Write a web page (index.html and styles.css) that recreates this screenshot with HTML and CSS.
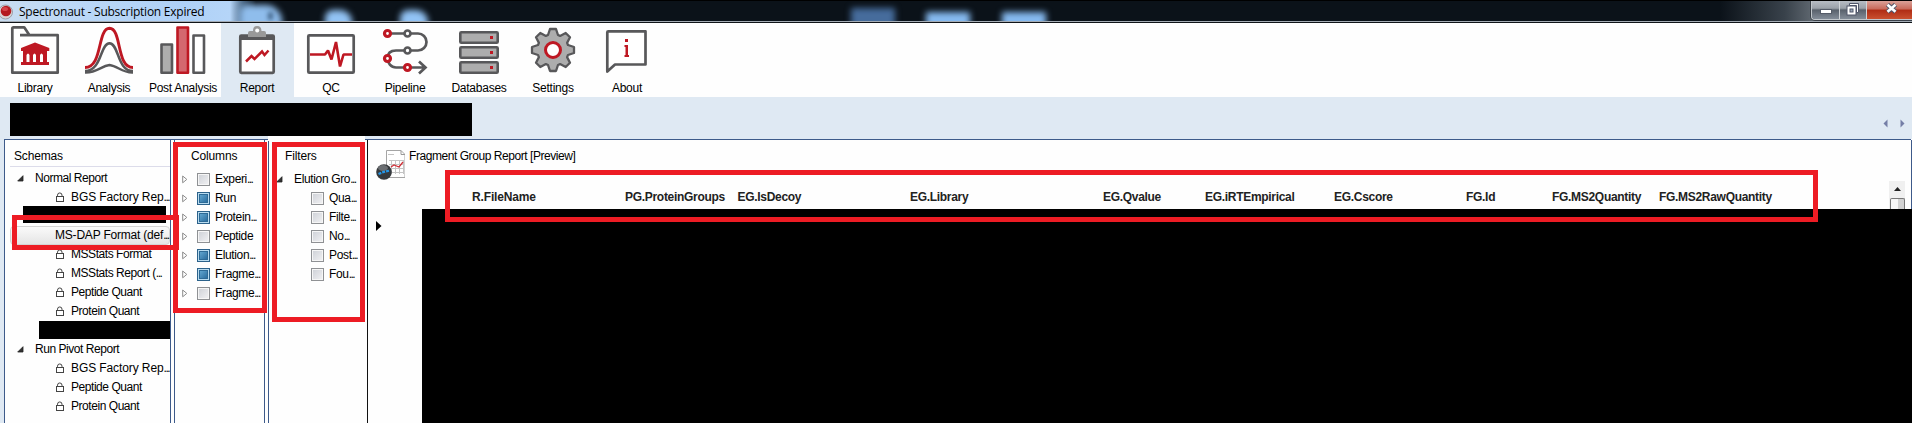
FILE: index.html
```html
<!DOCTYPE html>
<html lang="en">
<head>
<meta charset="utf-8">
<title>Spectronaut - Subscription Expired</title>
<link rel="stylesheet" href="styles.css">
</head>
<body>
<svg class="defs" width="0" height="0">
  <symbol id="lock" viewBox="0 0 10 11"><path d="M2.5 5V3.2A2.2 2.2 0 0 1 7 3.2V5" fill="none" stroke="#444"/><rect x="1.5" y="4.500" width="7" height="5" fill="#fff" stroke="#444"/></symbol>
  <symbol id="open" viewBox="0 0 7 7"><path d="M6 .7V6H.7Z" fill="#333" stroke="#222" stroke-width=".8"/></symbol>
  <symbol id="shut" viewBox="0 0 6 9"><path d="M.7 1V7.8L4.8 4.4Z" fill="#fff" stroke="#8c8c8c"/></symbol>
</svg>
<div class="window">
  <header class="titlebar">
    <svg class="appicon" viewBox="0 0 14 20" width="14" height="20"><circle cx="5.500" cy="12" r="7" fill="#d8d4d6" stroke="#8d8f98" stroke-width=".8"/><circle cx="6" cy="11" r="5.3" fill="#b41a20"/><ellipse cx="5" cy="9" rx="3" ry="2" fill="#d5444a"/></svg>
    <span class="title">Spectronaut - Subscription Expired</span>
    <i class="glow g1"></i><i class="glow g2"></i><i class="glow g3"></i><i class="glow g4"></i><i class="glow g5"></i><i class="glow g6"></i><i class="glow g7"></i>
    <div class="winbtns">
      <span class="wb min"><svg width="12" height="5"><rect x=".5" y=".5" width="11" height="4" fill="#fff" stroke="#555b68"/></svg></span>
      <span class="wb max"><svg width="13" height="13"><path d="M3.500.5H12.500V9.500H10.500V2.500H3.500Z" fill="#fff" stroke="#50566a"/><rect x="1" y="3" width="9" height="9" fill="#fff" stroke="#50566a"/><rect x="4" y="6" width="3" height="3" fill="#9aa7b8" stroke="#50566a"/></svg></span>
      <span class="wb close"><svg width="13" height="11"><path d="M2.500 1.500 10.500 9M10.500 1.500 2.500 9" stroke="#50566a" stroke-width="4.500"/><path d="M2.500 1.800 10.500 8.800M10.500 1.800 2.500 8.800" stroke="#fff" stroke-width="2.600"/></svg></span>
    </div>
  </header>

  <nav class="toolbar">
    <div class="tool"><svg viewBox="-2 23 74 53"><path d="M20 35.200H57.700V72.700H12.300V28.500Q12.300 27.300 13.500 27.300H24.200L29 34.500" fill="none" stroke="#58585a" stroke-width="2.700" stroke-linejoin="round"/><path d="M35 42.500 49.300 48V51H47V62H49V65H21V62H23V51H21V48Z" fill="#be1823"/><path d="M26.500 62V55Q28 52 29.500 55V62ZM33 62V55Q34.500 52 36 55V62ZM40 62V55Q41.500 52 43 55V62Z" fill="#fff"/></svg><span>Library</span></div>
    <div class="tool"><svg viewBox="72 23 74 53" fill="none"><g stroke="#58585a" stroke-width="2.500"><path d="M85 72.500C97 73 101 66 109.500 65C118 66 122 73 133 72.500"/><path d="M85 71C102 71 100 43.500 109.500 43.300C119 43.500 117 71 133 71"/></g><path d="M85 67.500C103 67.500 97 28.500 109.500 28.300C122 28.500 116 67.500 133 67.500" stroke="#be1823" stroke-width="2.900"/></svg><span>Analysis</span></div>
    <div class="tool"><svg viewBox="146 23 74 53" stroke-width="2.600" stroke-linejoin="round"><rect x="161.500" y="44.500" width="10.500" height="28.200" fill="#adadad" stroke="#58585a"/><rect x="177.500" y="27.500" width="10.500" height="45.200" fill="#d4686f" stroke="#be1823"/><rect x="193.500" y="35.500" width="10.500" height="37.200" fill="#fff" stroke="#58585a"/></svg><span>Post Analysis</span></div>
    <div class="tool on"><svg viewBox="220 23 74 53"><rect x="240.300" y="35.500" width="33.400" height="37.300" rx="1" fill="#fff" stroke="#58585a" stroke-width="2.700"/><path d="M240 35H274V40H240Z" fill="#58585a"/><path d="M248 37V33Q248 31 250 31H253Q253 26 257.200 26T261.500 31H264Q266 31 266 33V37Z" fill="#999"/><circle cx="257.200" cy="30.500" r="2" fill="#fff"/><path d="M246 61.500 251.500 56 254.500 59 262 51.500 264.500 55 268.500 50.500" fill="none" stroke="#be1823" stroke-width="2.500"/></svg><span>Report</span></div>
    <div class="tool"><svg viewBox="294 23 74 53" fill="none"><rect x="308.300" y="35.300" width="45.400" height="37.400" rx="1" fill="#fff" stroke="#58585a" stroke-width="2.700"/><path d="M310 54.500H325L328 50.500 331.500 59.500 336 42 340 66.500 343.500 54.500H352" stroke="#be1823" stroke-width="2.600" stroke-linejoin="bevel"/></svg><span>QC</span></div>
    <div class="tool"><svg viewBox="368 23 74 53" fill="none" stroke-width="2.700"><path d="M388 33.500H418A8.500 8.500 0 0 1 418 50.500H396C390 50.500 387.500 54 387.500 58.500S391 67.500 396 67.500H425M419 61.500 425.500 67.500 419 73.500" stroke="#58585a"/><g fill="#fff"><circle cx="387.500" cy="33.500" r="3" stroke="#be1823" stroke-width="3.200"/><circle cx="407.500" cy="33.500" r="3" stroke="#58585a"/><circle cx="407.500" cy="50.500" r="3" stroke="#58585a"/><circle cx="387.500" cy="58.500" r="3" stroke="#be1823" stroke-width="3.200"/><circle cx="407.500" cy="67.500" r="3" stroke="#be1823" stroke-width="3.200"/></g></svg><span>Pipeline</span></div>
    <div class="tool"><svg viewBox="442 23 74 53"><g fill="#adadad" stroke="#58585a" stroke-width="2.600"><rect x="460.300" y="32.300" width="37.400" height="10.400" rx="1"/><rect x="460.300" y="47.300" width="37.400" height="10.400" rx="1"/><rect x="460.300" y="62.300" width="37.400" height="10.400" rx="1"/></g><path d="M490 36h3v3h-3zM490 51h3v3h-3zM490 66h3v3h-3z" fill="#be1823"/></svg><span>Databases</span></div>
    <div class="tool"><svg viewBox="516 23 74 53"><path transform="translate(553 50)" d="M-5-15-3-21H3L5-15 7.100-14.100 12.700-17 17-12.700 14.100-7.100 15-5 21-3V3L15 5 14.100 7.100 17 12.700 12.700 17 7.100 14.100 5 15 3 21H-3L-5 15-7.100 14.100-12.700 17-17 12.700-14.100 7.100-15 5-21 3V-3L-15-5-14.100-7.100-17-12.700-12.700-17-7.100-14.100Z" fill="#adadad" stroke="#58585a" stroke-width="2.300" stroke-linejoin="round"/><circle cx="553" cy="50" r="7.500" fill="#fff" stroke="#be1823" stroke-width="3"/></svg><span>Settings</span></div>
    <div class="tool"><svg viewBox="590 23 74 53"><path d="M608.300 31.300H645.500V64.500H615L607.300 71.500V32.300Q607.300 31.300 608.300 31.300Z" fill="#fff" stroke="#58585a" stroke-width="2.700" stroke-linejoin="round"/><path d="M625 39h3v3h-3zM624.500 45h3.500v10h1v2h-4.500v-2h1v-8h-1z" fill="#be1823"/></svg><span>About</span></div>
  </nav>

  <div class="tabstrip">
    <div class="redacted tabs"></div>
    <svg class="pager" width="22" height="9"><path d="M4.500.5V8.500L.5 4.500ZM17.500.5V8.500L21.500 4.500Z" fill="#747ea6"/></svg>
  </div>

  <main class="body">
    <section class="panel schemas">
      <h2>Schemas</h2>
      <ul>
        <li class="group"><svg><use href="#open"/></svg>Normal Report</li>
        <li><svg><use href="#lock"/></svg><span class="wide">BGS Factory Rep</span><span class="dots">...</span></li>
        <li class="redacted r1"></li>
        <li class="current">MS-DAP Format (def<span class="dots">...</span></li>
        <li><svg><use href="#lock"/></svg>MSStats Format</li>
        <li><svg><use href="#lock"/></svg>MSStats Report (<span class="dots">...</span></li>
        <li><svg><use href="#lock"/></svg>Peptide Quant</li>
        <li><svg><use href="#lock"/></svg>Protein Quant</li>
        <li class="redacted r2"></li>
        <li class="group"><svg><use href="#open"/></svg>Run Pivot Report</li>
        <li><svg><use href="#lock"/></svg><span class="wide">BGS Factory Rep</span><span class="dots">...</span></li>
        <li><svg><use href="#lock"/></svg>Peptide Quant</li>
        <li><svg><use href="#lock"/></svg>Protein Quant</li>
      </ul>
    </section>
    <section class="panel columns">
      <h2>Columns</h2>
      <ul>
        <li><svg><use href="#shut"/></svg><i class="box"></i>Experi<span class="dots">...</span></li>
        <li><svg><use href="#shut"/></svg><i class="box full"></i>Run</li>
        <li><svg><use href="#shut"/></svg><i class="box full"></i>Protein<span class="dots">...</span></li>
        <li><svg><use href="#shut"/></svg><i class="box"></i>Peptide</li>
        <li><svg><use href="#shut"/></svg><i class="box full"></i>Elution<span class="dots">...</span></li>
        <li><svg><use href="#shut"/></svg><i class="box full"></i>Fragme<span class="dots">...</span></li>
        <li><svg><use href="#shut"/></svg><i class="box"></i>Fragme<span class="dots">...</span></li>
      </ul>
    </section>
    <section class="panel filters">
      <h2>Filters</h2>
      <ul>
        <li class="group"><svg><use href="#open"/></svg>Elution Gro<span class="dots">...</span></li>
        <li><i class="box"></i>Qua<span class="dots">...</span></li>
        <li><i class="box"></i>Filte<span class="dots">...</span></li>
        <li><i class="box"></i>No<span class="dots">...</span></li>
        <li><i class="box"></i>Post<span class="dots">...</span></li>
        <li><i class="box"></i>Fou<span class="dots">...</span></li>
      </ul>
    </section>
    <section class="preview">
      <div class="caption">
        <svg width="30" height="31" viewBox="375 149 30 31"><path d="M386.500 150.500H401L405 154.500V177.500H386.500Z" fill="#fff" stroke="#a5a5a5"/><path d="M401 150.500V154.500H405" fill="none" stroke="#999"/><path d="M388 154.500H394M389 160.500H403.500M389 164.500H403.500M389 168.500H403.500M389 172.500H403.500M391.500 160V174M395.500 160V174M399.500 160V174M403.500 160V174" stroke="#c4c4c4"/><path d="M391 167 394 165 399 167 403 162" fill="none" stroke="#d03038" stroke-width="1.300"/><circle cx="384" cy="172" r="7.800" fill="#36393c"/><ellipse cx="383" cy="168" rx="5" ry="3" fill="#6b6e72"/><path d="M378.500 174 382 172.500 386 171.500 390 170.500" fill="none" stroke="#2597e8" stroke-width="2.300" stroke-dasharray="3 1"/></svg>
        <span>Fragment Group Report [Preview]</span>
      </div>
      <div class="gridhead">
        <b class="h1">R.FileName</b><b class="h2">PG.ProteinGroups</b><b class="h3">EG.IsDecoy</b><b class="h4">EG.Library</b><b class="h5">EG.Qvalue</b><b class="h6">EG.iRTEmpirical</b><b class="h7">EG.Cscore</b><b class="h8">FG.Id</b><b class="h9">FG.MS2Quantity</b><b class="h10">FG.MS2RawQuantity</b>
        <div class="scroll"><svg width="7" height="4"><path d="M0 4 3.500 0 7 4Z" fill="#222"/></svg><i></i></div>
      </div>
      <div class="gridbody">
        <div class="rowhead"><svg width="6" height="10"><path d="M0 0 5.500 5 0 10Z"/></svg></div>
        <div class="redacted data"></div>
      </div>
    </section>
    <div class="gap"></div>
  </main>

  <div class="mark m1"></div><div class="mark m2"></div><div class="mark m3"></div><div class="mark m4"></div>
</div>
</body>
</html>
```
FILE: styles.css
```css
* { box-sizing: border-box; }
body { margin: 0; background: #fff; font: 12px/19px "Liberation Sans", Arial, sans-serif; color: #000; }
ul, h2 { margin: 0; padding: 0; list-style: none; font-size: 12px; font-weight: normal; }
.defs { position: absolute; }
.window { position: relative; width: 1912px; height: 423px; overflow: hidden; display: flex; flex-direction: column; }
.redacted { background: #000; }

.titlebar { position: relative; flex: none; height: 23px; display: flex; overflow: hidden; border-top: 1px solid #000; border-bottom: 1px solid #101418;
  background: linear-gradient(90deg, #c9dcf0 0, #bcd8f6 70px, #afd1f7 180px, #b5d5f8 230px, #4b6885 243px, #0b1219 256px, #0b1219 1720px, #39424b 1785px, #777f87 1830px, #8b9299 1912px); }
.titlebar::after { content: ""; position: absolute; left: 0; right: 0; bottom: 0; height: 1px; background: #a4acb5; }
.appicon { flex: none; margin-top: -1px; }
.title { position: relative; z-index: 1; margin-left: 5px; font: 12px/22px "Open Sans", "Noto Sans", sans-serif; letter-spacing: -.25px; white-space: nowrap; }
.glow { position: absolute; filter: blur(3px); background: #92c3f5; }
.g1 { left: 240px; top: 4px; width: 42px; height: 24px; border-radius: 8px 16px 0 0; background: #8fbdec; }
.g2 { left: 325px; top: 9px; width: 27px; height: 18px; border-radius: 8px 12px 0 0; }
.g3 { left: 400px; top: 9px; width: 28px; height: 18px; border-radius: 8px 12px 0 0; }
.g4 { left: 851px; top: 7px; width: 44px; height: 20px; background: #466c9c; }
.g5 { left: 926px; top: 11px; width: 44px; height: 16px; background: #86baf0; }
.g6 { left: 1002px; top: 11px; width: 44px; height: 16px; background: #86baf0; }
.g7 { left: 268px; top: 11px; width: 5px; height: 8px; filter: blur(2px); background: #46688c; }
.winbtns { position: relative; z-index: 2; display: flex; width: 101px; height: 19px; margin-left: auto; border: solid #c2c7cc; border-width: 0 0 1px 1px; border-radius: 0 0 0 4px; overflow: hidden; box-shadow: 0 0 0 1px #3a4048; }
.wb { height: 18px; display: flex; justify-content: center; background: linear-gradient(#b7bcc4 0, #9ba1a9 40%, #59616c 50%, #838c98 100%); border-right: 1px solid #d0d4d8; }
.min { width: 28px; }
.max { width: 27px; }
.close { width: 45px; border: 0; background: linear-gradient(#dba198 0, #c8695a 45%, #b02c14 50%, #c9502f 100%); }
.min svg { margin-top: 8px; }
.max svg { margin: 2px 0 0 -2px; }
.close svg { margin: 2px 0 0 3px; }

.toolbar { flex: none; height: 74px; display: flex; margin-left: -2px; background: #fefefe; }
.tool { width: 74px; display: flex; flex-direction: column; text-align: center; white-space: nowrap; letter-spacing: -.25px; }
.tool svg { width: 74px; height: 53px; }
.tool span { line-height: 24px; height: 21px; }
.tool.on { background: linear-gradient(90deg, #fefefe 1px, #dfe9f3 1px); }

.tabstrip { flex: none; height: 42px; padding: 6px 7px 3px 10px; display: flex; justify-content: space-between; background: #dfe9f3; }
.tabs { width: 462px; height: 33px; }
.pager { margin-top: 16px; }

.body { position: relative; flex: 1; display: flex; gap: 3px; margin: 0 1px 0 0; padding-left: 4px; background: linear-gradient(90deg, #dfe9f3 4px, #fefefe 4px); }
.body::before { content: ""; position: absolute; left: 5px; right: 0; top: 0; height: 1px; background: #3d5a8a; }
.gap { position: absolute; left: 268px; top: -3px; width: 97px; height: 5px; background: #fefefe; }
.body::after { content: ""; position: absolute; right: -1px; top: 1px; width: 1px; height: 69px; background: #3d5a8a; }
.panel { flex: none; overflow: hidden; white-space: nowrap; letter-spacing: -.35px; }
.panel h2 { height: 28px; padding-top: 8px; letter-spacing: -.15px; }
.panel li { height: 19px; display: flex; align-items: center; }
.panel li svg { flex: none; }
.wide { letter-spacing: -.1px; }
.dots { letter-spacing: -1.500px; }
.schemas { width: 167px; letter-spacing: -.45px; border: solid #3d5a8a; border-width: 0 1px; }
.schemas h2 { margin-left: 5px; padding-left: 4px; border-bottom: 1px solid #dcdcea; }
.schemas ul { padding-top: 2px; }
.schemas li { padding-left: 50px; }
.schemas li svg { width: 10px; height: 11px; margin-right: 6px; }
.schemas li.group { padding-left: 12px; }
.schemas li.group svg, .filters li.group svg { width: 7px; height: 7px; margin-right: 11px; }
.schemas li.r1 { width: 143px; height: 17px; margin: -1px 0 3px 18px; padding: 0; }
.schemas li.r2 { width: 132px; height: 18px; margin: 0 0 1px 34px; padding: 0; }
.schemas li.current { margin-left: 5px; padding-left: 44px; letter-spacing: -.2px; border: 1px solid #d4d4d4; border-radius: 4px; background: linear-gradient(#fafafa, #e5e5e5); }
.schemas li.current .dots { letter-spacing: -1.500px; }
.columns { width: 91px; border: solid #3d5a8a; border-width: 0 1px; }
.columns h2 { padding-left: 16px; }
.columns ul, .filters ul { padding-top: 3px; }
.columns li { padding-left: 7px; }
.columns li svg { width: 6px; height: 9px; margin-right: 9px; }
.box { flex: none; width: 13px; height: 13px; margin-right: 5px; border: 1px solid #8f9194; background: linear-gradient(135deg, #cdd0d6, #f2f2f4); box-shadow: inset 0 0 0 1px #f6f6f6; }
.box.full { border-color: #2c628b; background: linear-gradient(135deg, #6fb4dc, #1d5f92); box-shadow: inset 0 0 0 1px #b9dcf0, inset 0 0 0 2px #2d6a96; }
.filters { width: 96px; border-left: 1px solid #3d5a8a; }
.filters h2 { padding-left: 16px; }
.filters li { padding-left: 42px; }
.filters li.group { padding-left: 7px; }

.preview { flex: 1; min-width: 0; display: flex; flex-direction: column; border-left: 1px solid #111; }
.caption { display: flex; height: 50px; padding: 10px 0 0 7px; gap: 4px; letter-spacing: -.44px; }
.caption svg { flex: none; }
.caption span { margin-top: -2px; }
.gridhead { position: relative; height: 20px; padding-left: 104px; display: flex; color: #222; white-space: nowrap; letter-spacing: -.3px; }
.gridhead b { flex: none; line-height: 17px; }
.h1 { width: 153px; letter-spacing: -.15px; }
.h2 { width: 112.500px; }
.h3 { width: 172.500px; }
.h4 { width: 193px; }
.h5 { width: 102px; }
.h6 { width: 129px; }
.h7 { width: 132px; }
.h8 { width: 86px; }
.h9 { width: 107px; }
.h10 { width: 120px; }
.scroll { margin: -8px 6px 0 auto; width: 16px; height: 28px; background: #f0f0f0; display: flex; flex-direction: column; align-items: center; }
.scroll svg { margin-top: 6px; }
.scroll i { width: 15px; height: 11px; margin-top: 7px; border: 1px solid #777; border-bottom: 0; border-radius: 2px 2px 0 0; background: linear-gradient(90deg, #f6f6f6 50%, #d2d2d2 50%); }
.gridbody { flex: 1; display: flex; margin-right: -1px; }
.rowhead { width: 54px; padding: 9px 0 0 8px; }
.data { flex: 1; }

.mark { position: absolute; border: 5px solid #ed1c24; }
.m1 { left: 12px; top: 215px; width: 167px; height: 35px; }
.m2 { left: 173px; top: 142px; width: 94px; height: 171px; }
.m3 { left: 272px; top: 142px; width: 93px; height: 180px; }
.m4 { left: 445px; top: 170px; width: 1373px; height: 52px; }
```
